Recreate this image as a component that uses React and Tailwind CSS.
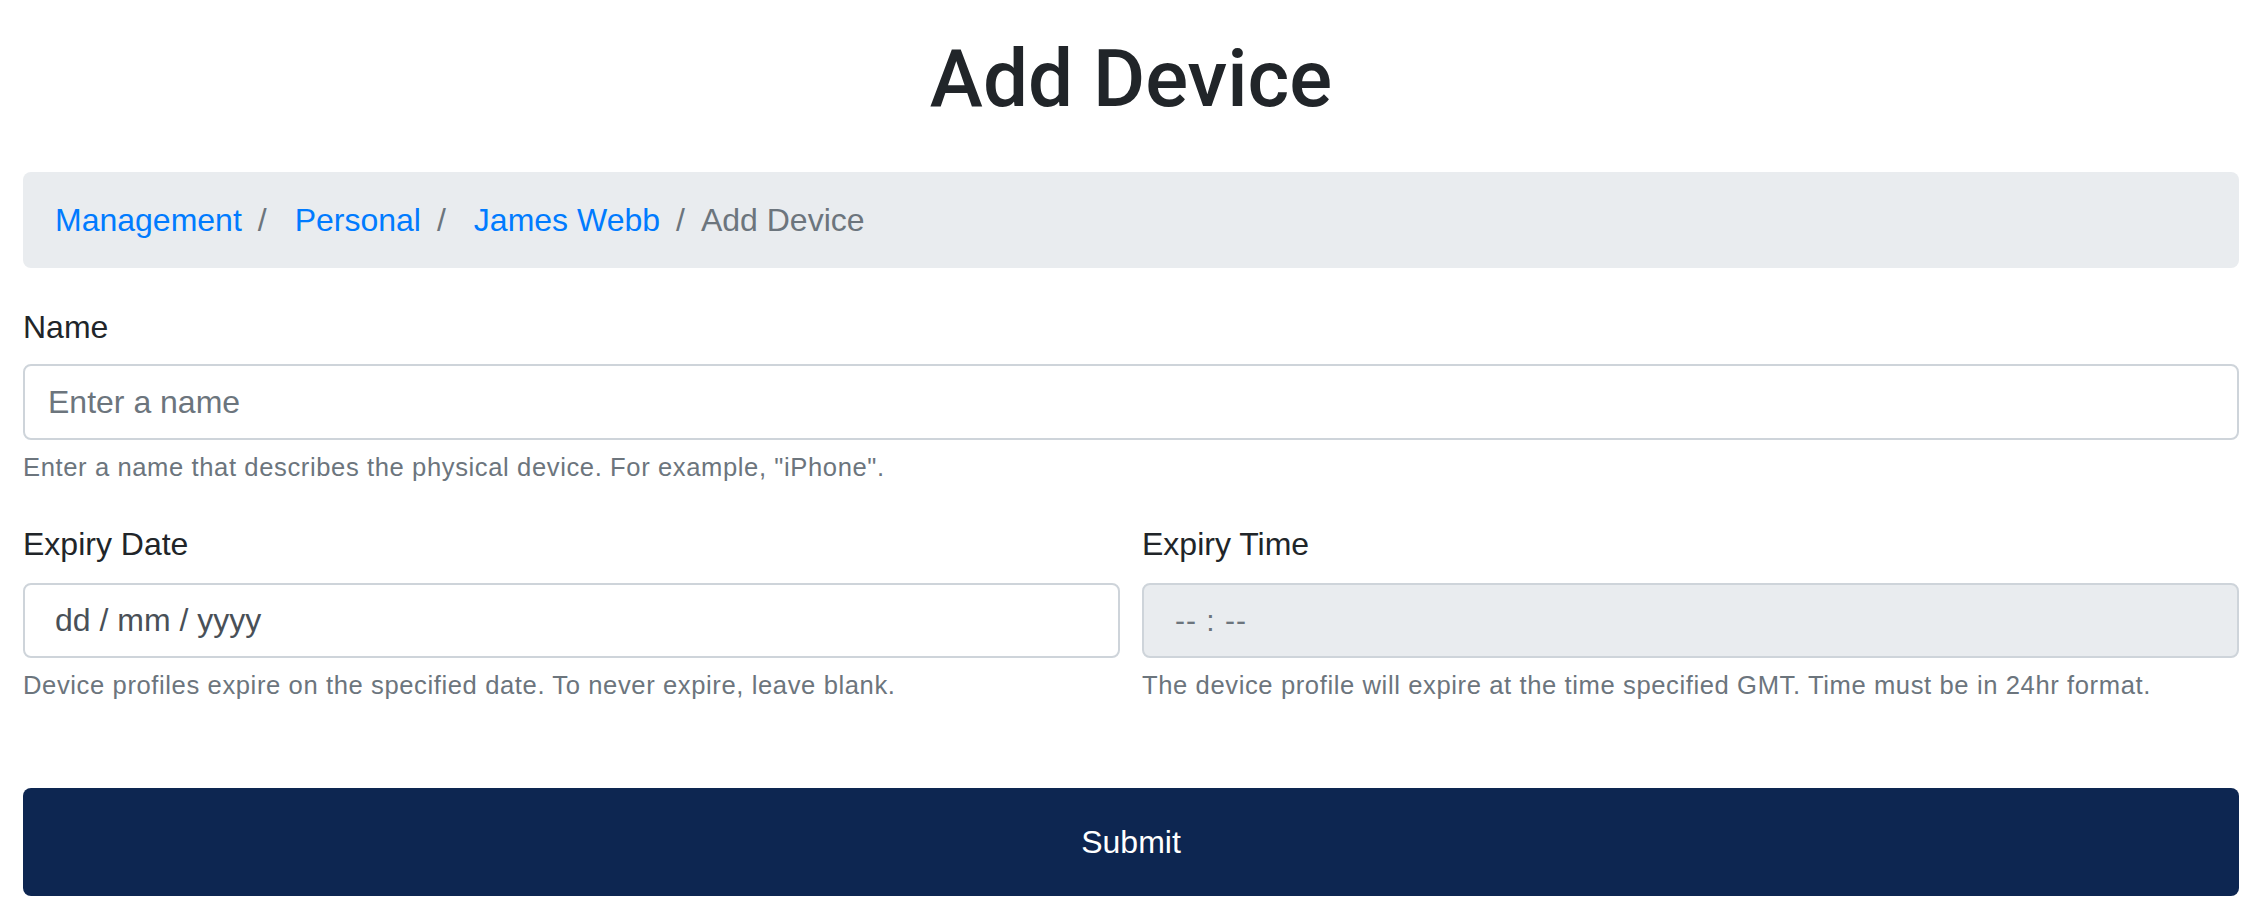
import React from 'react';

const crumbs = [
    { label: 'Management', href: '#' },
    { label: 'Personal', href: '#' },
    { label: 'James Webb', href: '#' },
];

function HelpText({ children }) {
    return (
        <small className="block mt-[8px] text-[25.6px] leading-[38.4px] tracking-[0.6px] text-[#6c757d]">{children}</small>
    );
}

export default function App() {
    return (
        <div className="min-h-[916px] bg-white pl-[23px] pr-[21px] text-[#212529] font-['Liberation_Sans',Arial,sans-serif]">
            <h1 className="pt-[31px] text-center text-[80px] leading-[96px] font-medium font-['Roboto','Liberation_Sans',sans-serif]">Add Device</h1>

            {/* Breadcrumb */}
            <nav className="mt-[45px] h-[96px] rounded-[8px] bg-[#e9ecef] px-[32px] py-[24px] text-[32px] leading-[48px]">
                <ol className="flex items-center">
                    {crumbs.map((c, i) => (
                        <li key={c.label} className="flex items-center">
                            <a href={c.href} className={i > 0 ? 'pl-[12px] text-[#007bff]' : 'text-[#007bff]'}>{c.label}</a>
                            <span className="mx-[16px] text-[#6c757d]">/</span>
                        </li>
                    ))}
                    <li className="text-[#6c757d]">Add Device</li>
                </ol>
            </nav>

            <form onSubmit={(e) => e.preventDefault()}>
                {/* Name */}
                <div className="mt-[35px]">
                    <label className="block mb-[13px] text-[32px] leading-[48px]">Name</label>
                    <input
                        type="text"
                        placeholder="Enter a name"
                        className="block w-full h-[76px] rounded-[8px] border-2 border-[#ced4da] bg-white px-[23px] text-[32px] text-[#495057] placeholder:text-[#6c757d] outline-none"
                    />
                    <HelpText>Enter a name that describes the physical device. For example, "iPhone".</HelpText>
                </div>

                {/* Expiry */}
                <div className="mt-[34px] grid grid-cols-2 gap-x-[22px]">
                    <div>
                        <label className="block mb-[15px] text-[32px] leading-[48px]">Expiry Date</label>
                        <input
                            type="text"
                            readOnly
                            value="dd / mm / yyyy"
                            className="block w-full h-[75px] rounded-[8px] border-2 border-[#ced4da] bg-white px-[30px] text-[32px] text-[#495057] outline-none"
                        />
                        <HelpText>Device profiles expire on the specified date. To never expire, leave blank.</HelpText>
                    </div>
                    <div>
                        <label className="block mb-[15px] text-[32px] leading-[48px]">Expiry Time</label>
                        <input
                            type="text"
                            readOnly
                            value="-- : --"
                            className="block w-full h-[75px] rounded-[8px] border-2 border-[#ced4da] bg-[#e9ecef] px-[31px] text-[30px] tracking-[1px] text-[#6c757d] outline-none"
                        />
                        <HelpText>The device profile will expire at the time specified GMT. Time must be in 24hr format.</HelpText>
                    </div>
                </div>

                <button
                    type="submit"
                    className="mt-[83px] block w-full h-[108px] rounded-[8px] bg-[#0d2651] text-white text-[32px] leading-[48px]"
                >
                    Submit
                </button>
            </form>
        </div>
    );
}
